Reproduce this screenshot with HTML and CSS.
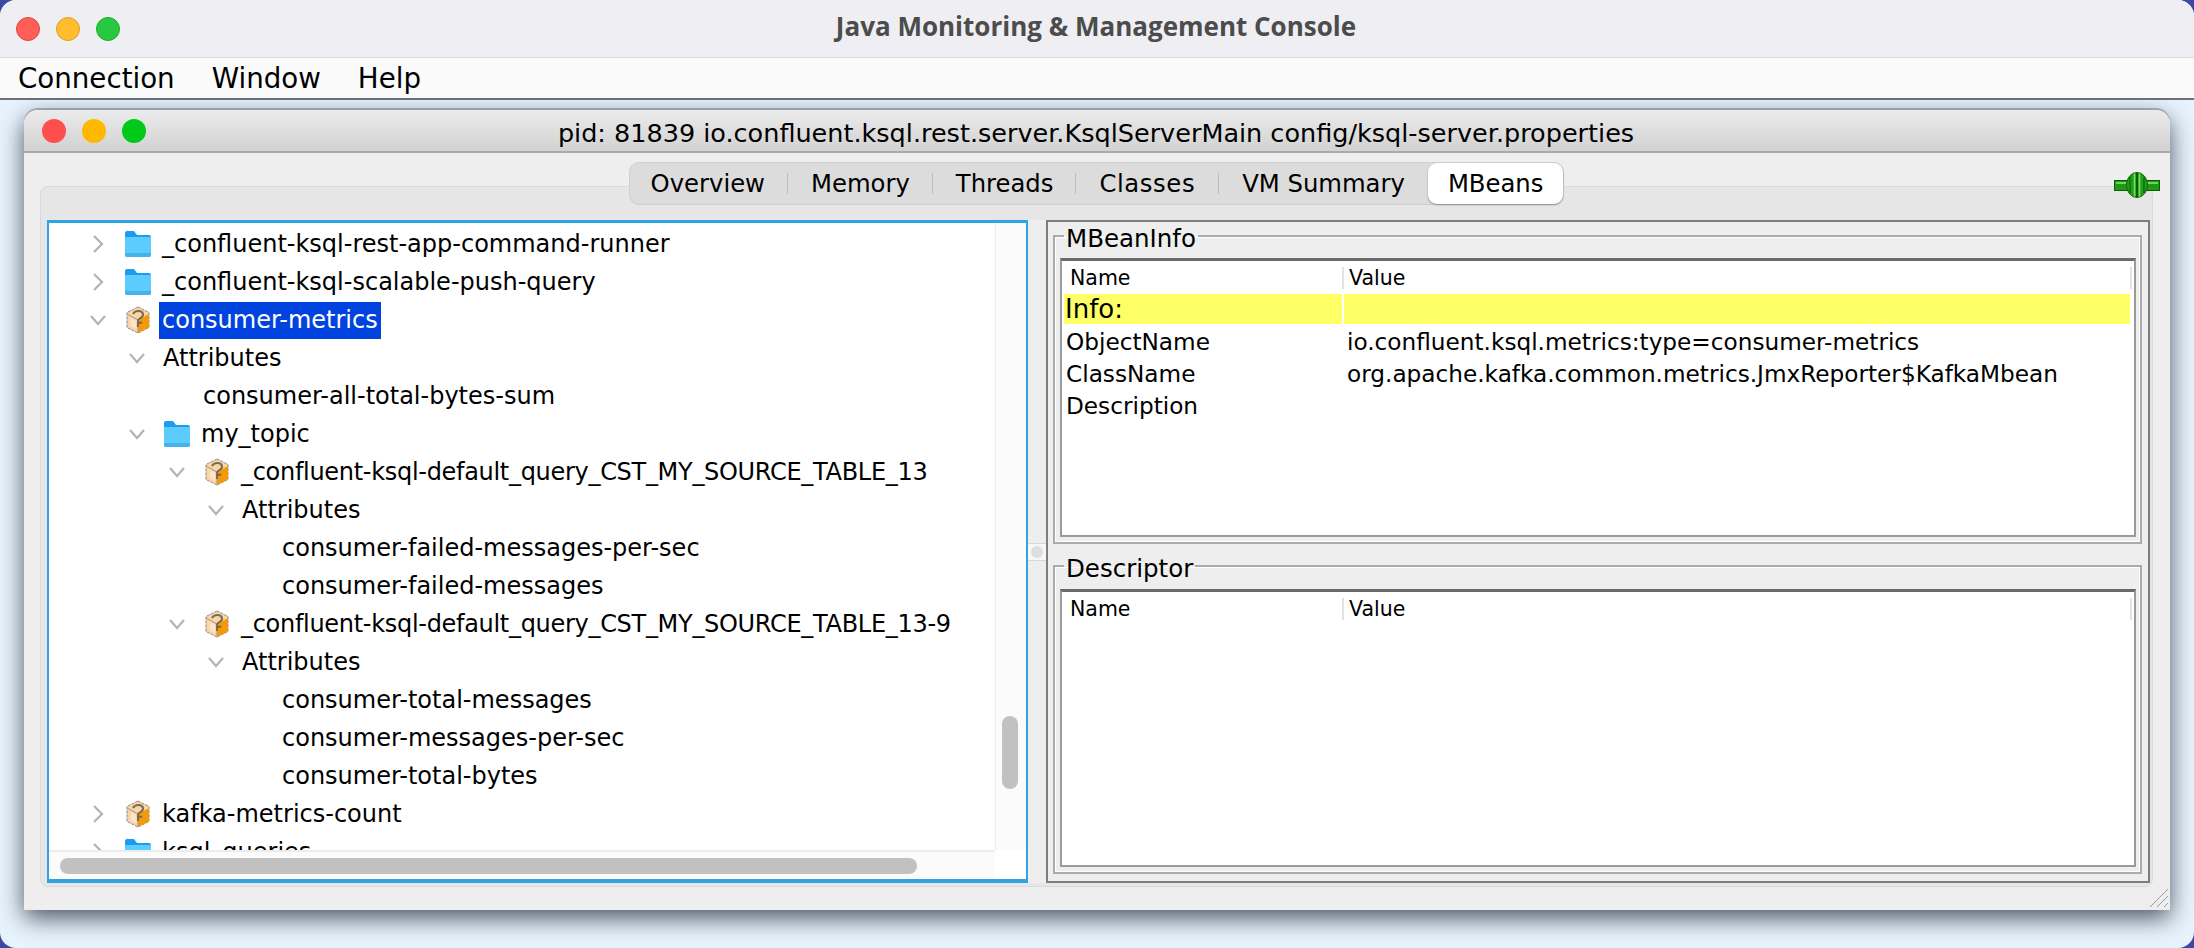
FILE: index.html
```html
<!DOCTYPE html>
<html lang="en">
<head>
  <meta charset="UTF-8">
  <title>Java Monitoring &amp; Management Console</title>
  <link rel="stylesheet" href="styles.css">
</head>
<body>
  <div class="desktop">
    <header class="app-title">
      <div class="lights">
        <span class="light red"></span><span class="light yellow"></span><span class="light green"></span>
      </div>
      <div class="app-name">Java Monitoring &amp; Management Console</div>
    </header>
    <nav class="menubar">
      <span>Connection</span><span>Window</span><span>Help</span>
    </nav>
    <div class="window">
      <div class="win-title">
        <div class="lights small">
          <span class="light red2"></span><span class="light yellow2"></span><span class="light green2"></span>
        </div>
        <div class="win-name">pid: 81839 io.confluent.ksql.rest.server.KsqlServerMain config/ksql-server.properties</div>
      </div>
      <div class="win-body">
        <div class="tabs-row">
          <div class="tabs">
            <span class="tab sep">Overview</span>
            <span class="tab sep">Memory</span>
            <span class="tab sep">Threads</span>
            <span class="tab sep">Classes</span>
            <span class="tab">VM Summary</span>
            <span class="tab active">MBeans</span>
          </div>
          <svg class="plug" width="46" height="26" viewBox="0 0 46 26">
            <rect x="0.5" y="8.5" width="45" height="10" fill="#1f9a14" stroke="#0b5c08"/>
            <rect x="2" y="10" width="42" height="2" fill="#6fd65c"/>
            <ellipse cx="23" cy="13" rx="10.5" ry="12.5" fill="#24a018" stroke="#0f650c"/>
            <path d="M16 5v16M30 5v16" stroke="#127a0e" stroke-width="2"/>
            <path d="M20.5 1.5v23M25.5 1.5v23" stroke="#7bdc68" stroke-width="1.5"/>
            <path d="M23 1v24" stroke="#0b5c08" stroke-width="2"/>
          </svg>
        </div>
        <div class="pane">
          <div class="tree">
            <div class="tree-view">
              <div class="tree-rows" id="rows"></div>
              <div class="vbar"><div class="vthumb"></div></div>
            </div>
            <div class="hbar-row">
              <div class="hbar"><div class="hthumb"></div></div>
              <div class="corner"></div>
            </div>
          </div>
          <div class="divider"><div class="handle"><span class="dot"></span></div></div>
          <div class="details">
            <fieldset class="group group-top">
              <legend>MBeanInfo</legend>
              <div class="table">
                <div class="thead"><span class="th name-col">Name</span><span class="th val-col">Value</span></div>
                <div class="info-row"><span class="name-col">Info:</span><span class="val-col"></span></div>
                <div class="row"><span class="name-col">ObjectName</span><span class="val-col">io.confluent.ksql.metrics:type=consumer-metrics</span></div>
                <div class="row"><span class="name-col">ClassName</span><span class="val-col">org.apache.kafka.common.metrics.JmxReporter$KafkaMbean</span></div>
                <div class="row"><span class="name-col">Description</span><span class="val-col"></span></div>
              </div>
            </fieldset>
            <fieldset class="group group-bottom">
              <legend>Descriptor</legend>
              <div class="table">
                <div class="thead"><span class="th name-col">Name</span><span class="th val-col">Value</span></div>
              </div>
            </fieldset>
          </div>
        </div>
      </div>
      <svg class="grip" width="20" height="20" viewBox="0 0 20 20">
        <path d="M1 19L19 1M8 19L19 8M15 19L19 15" stroke="#9a9a9a" stroke-width="1" fill="none"/>
      </svg>
    </div>
  </div>

  <script>
    const treeData = [
      { text: "_confluent-ksql-rest-app-command-runner", level: 0, arrow: "right", icon: "folder" },
      { text: "_confluent-ksql-scalable-push-query", level: 0, arrow: "right", icon: "folder" },
      { text: "consumer-metrics", level: 0, arrow: "down", icon: "bean", selected: true },
      { text: "Attributes", level: 1, arrow: "down" },
      { text: "consumer-all-total-bytes-sum", level: 2 },
      { text: "my_topic", level: 1, arrow: "down", icon: "folder" },
      { text: "_confluent-ksql-default_query_CST_MY_SOURCE_TABLE_13", level: 2, arrow: "down", icon: "bean" },
      { text: "Attributes", level: 3, arrow: "down" },
      { text: "consumer-failed-messages-per-sec", level: 4 },
      { text: "consumer-failed-messages", level: 4 },
      { text: "_confluent-ksql-default_query_CST_MY_SOURCE_TABLE_13-9", level: 2, arrow: "down", icon: "bean" },
      { text: "Attributes", level: 3, arrow: "down" },
      { text: "consumer-total-messages", level: 4 },
      { text: "consumer-messages-per-sec", level: 4 },
      { text: "consumer-total-bytes", level: 4 },
      { text: "kafka-metrics-count", level: 0, arrow: "right", icon: "bean" },
      { text: "ksql_queries", level: 0, arrow: "right", icon: "folder" },
    ];

    const arrows = {
      right: '<svg class="arrow" width="12" height="20" viewBox="0 0 12 20"><path d="M2 2l8 8-8 8" fill="none" stroke="#b4b4b4" stroke-width="2.2"/></svg>',
      down: '<svg class="arrow" width="18" height="12" viewBox="0 0 18 12"><path d="M2 2l7 8 7-8" fill="none" stroke="#b4b4b4" stroke-width="2.2"/></svg>',
    };
    const icons = {
      folder: `<svg class="icon" width="28" height="28" viewBox="0 0 28 28">
        <path d="M1 3a2 2 0 0 1 2-2h7l3 4h12a2 2 0 0 1 2 2v4H1z" fill="#1c9cf0"/>
        <path d="M1 7h26v18a2 2 0 0 1-2 2H3a2 2 0 0 1-2-2z" fill="#5ccbfd"/>
        <path d="M1 23h26v2a2 2 0 0 1-2 2H3a2 2 0 0 1-2-2z" fill="#45b2ea"/>
      </svg>`,
      bean: `<svg class="icon" width="28" height="28" viewBox="0 0 28 28">
        <path d="M14 1l11 5.5v15L14 27 3 21.500v-15z" fill="#f6d6aa" stroke="#8d8a84" stroke-dasharray="3 1"/>
        <path d="M14 14l11-6v13.500L14 27z" fill="#f39a0c"/>
        <path d="M3 8l11 6v13" fill="none" stroke="#a8977e"/>
        <path d="M9 8c2-4 9-4 10 0s-5 4-5 7 3 2 4 1M14 15v6" fill="none" stroke="#7d6a52" stroke-width="2"/>
        <path d="M7 12l5 3v8l-5-3z" fill="#fbe6c8"/>
      </svg>`,
    };

    const rowsEl = document.getElementById('rows');
    treeData.forEach(item => {
      const row = document.createElement('div');
      row.className = 'tree-row lvl' + item.level;
      row.innerHTML = `
        <span class="arrow-box">${item.arrow ? arrows[item.arrow] : ''}</span>
        ${item.icon ? icons[item.icon] : ''}
        <span class="label${item.selected ? ' selected' : ''}">${item.text}</span>
      `;
      rowsEl.appendChild(row);
    });
  </script>
</body>
</html>
```

FILE: styles.css
```css
* {
  box-sizing: border-box;
}
html, body {
  margin: 0;
  height: 100%;
  overflow: hidden;
  background: #3b49a6;
}
body {
  font-family: "DejaVu Sans", sans-serif;
  color: #000;
}
.desktop {
  width: 2194px;
  height: 948px;
  background: #e8f4fd;
  border-radius: 16px;
  overflow: hidden;
}

/* outer app */
.app-title {
  height: 57px;
  background: #eeeef3;
  display: flex;
  align-items: center;
  padding-left: 16px;
  position: relative;
  z-index: 2;
}
.lights {
  display: flex;
  gap: 16px;
}
.light {
  width: 24px;
  height: 24px;
  border-radius: 50%;
}
.red { background: #ff5f57; border: 1px solid #e2463f; }
.yellow { background: #febc2e; border: 1px solid #df9f24; }
.green { background: #28c840; border: 1px solid #1dad2b; }
.red2 { background: #ff4f4d; }
.yellow2 { background: #ffb800; }
.green2 { background: #00c91a; }
.app-name {
  flex: 1;
  text-align: center;
  font-family: "Open Sans", sans-serif;
  font-weight: 700;
  font-size: 26px;
  color: #4c4c4c;
  padding: 0 122px 6px 0;
}
.menubar {
  height: 43px;
  background: #fafafa;
  border-top: 1px solid #dcdcdc;
  border-bottom: 2px solid #6b7076;
  display: flex;
  align-items: center;
  gap: 37px;
  padding-left: 18px;
  font-size: 27.700px;
  position: relative;
  z-index: 2;
}

/* inner window */
.window {
  position: relative;
  width: 2146px;
  height: 800px;
  margin: 10px 0 0 24px;
  background: #eeeeee;
  border-radius: 14px 14px 0 0;
  box-shadow: 0 8px 24px rgba(20, 30, 45, 0.75), 0 -2px 0 #b4bcc8;
}
.win-title {
  height: 43px;
  background: linear-gradient(#ebebeb, #d2d2d2);
  border-bottom: 2px solid #a9a9a9;
  border-radius: 14px 14px 0 0;
  display: flex;
  align-items: center;
  padding-left: 18px;
}
.win-name {
  flex: 1;
  text-align: center;
  font-size: 25.500px;
  padding: 5px 124px 0 0;
  white-space: nowrap;
}
.win-body {
  padding: 8px 20px 0 23px;
}
.tabs-row {
  height: 59px;
  display: flex;
  justify-content: center;
  position: relative;
}
.tabs {
  height: 43px;
  margin: 1px 4px 0 0;
  display: flex;
  align-items: center;
  background: #dcdcdc;
  border: 1px solid #d0d0d0;
  border-radius: 10px;
  position: relative;
  font-size: 24.300px;
  z-index: 1;
}
.tab {
  height: 41px;
  display: flex;
  align-items: center;
  padding: 0 23px;
  position: relative;
  white-space: nowrap;
}
.tab:first-child {
  padding-left: 21px;
}
.tab:nth-child(4) {
  letter-spacing: 0.6px;
  padding-right: 24px;
}
.tab.sep::after {
  content: "";
  position: absolute;
  right: 0;
  top: 10px;
  bottom: 10px;
  width: 1px;
  background: #bdbdbd;
}
.tab.active {
  padding: 0 20px;
  background: #fff;
  border-radius: 9px;
  box-shadow: 0 1px 2px rgba(0, 0, 0, 0.35);
}
.plug {
  position: absolute;
  right: -10px;
  top: 11px;
  z-index: 1;
}
.pane {
  display: flex;
  height: 663px;
  position: relative;
}
.pane::before {
  content: "";
  position: absolute;
  left: -7px;
  right: -3px;
  top: -34px;
  bottom: -4px;
  background: #e6e6e6;
  border: 1px solid #dadada;
  border-radius: 8px;
}

/* tree */
.tree {
  position: relative;
  width: 981px;
  flex: none;
  background: #fff;
  border-top: 3px solid #2ea3e6;
  border-left: 2px solid #2ea3e6;
  border-right: 2px solid #2ea3e6;
  border-bottom: 4px solid #2ea3e6;
  display: flex;
  flex-direction: column;
  font-size: 24px;
}
.tree-view {
  height: 627px;
  display: flex;
  overflow: hidden;
}
.tree-rows {
  flex: 1;
  overflow: hidden;
  padding-top: 2px;
}
.tree-row {
  height: 38px;
  display: flex;
  align-items: center;
  white-space: nowrap;
}
.lvl0 { padding-left: 31px; }
.lvl1 { padding-left: 70px; }
.lvl2 { padding-left: 110px; }
.lvl3 { padding-left: 149px; }
.lvl4 { padding-left: 189px; }
.arrow-box {
  width: 36px;
  height: 28px;
  margin-right: 5px;
  display: flex;
  align-items: center;
  justify-content: center;
  flex: none;
}
.icon {
  flex: none;
  margin: 0 7px 0 3px;
}
.label {
  padding: 0 3px;
  line-height: 37px;
}
.lvl2 .icon + .label {
  letter-spacing: -0.3px;
}
.label.selected {
  background: #0043df;
  color: #fff;
}
.vbar {
  width: 31px;
  background: #fbfbfb;
  border-left: 1px solid #ececec;
  position: relative;
  flex: none;
}
.vthumb {
  position: absolute;
  left: 6px;
  top: 493px;
  width: 16px;
  height: 73px;
  background: #c1c1c1;
  border-radius: 8px;
}
.hbar-row {
  flex: 1;
  display: flex;
}
.hbar {
  flex: 1;
  background: #fbfbfb;
  border-top: 2px solid #ececec;
  padding: 6px 0 0 11px;
}
.hthumb {
  width: 857px;
  height: 16px;
  background: #c1c1c1;
  border-radius: 8px;
}
.corner {
  width: 31px;
  background: #fff;
}

/* splitter */
.divider {
  width: 18px;
  flex: none;
  position: relative;
  z-index: 1;
  background: #eeeeee;
}
.handle {
  position: absolute;
  left: 0;
  right: 0;
  top: 323px;
  height: 18px;
  background: #f6f6f6;
  border-top: 1px solid #d8d8d8;
  border-bottom: 1px solid #d8d8d8;
  display: flex;
  align-items: center;
  justify-content: center;
}
.dot {
  width: 12px;
  height: 12px;
  border-radius: 50%;
  background: #dedede;
}

/* details */
.details {
  flex: 1;
  position: relative;
  z-index: 1;
  background: #eeeeee;
  border: 2px solid #7d7d7d;
  padding: 0 6px 0 5px;
}
.group {
  margin: 0;
  padding: 4px 4px 5px 5px;
  border: 2px solid #ababab;
  box-shadow: inset 0 0 0 1px #fff;
  font-size: 24.500px;
  min-width: 0;
}
.group legend {
  margin-left: 4px;
  padding: 6px 2px 0;
  line-height: 30px;
}
.group-top { height: 326px; margin-top: -4px; }
.group-bottom { height: 326px; margin-top: 4px; padding-top: 5px; }
.table {
  background: #fff;
  border: 2px solid #9a9a9a;
  border-top: 3px solid #6a6a6a;
  font-size: 23.200px;
  padding: 0 4px 0 2px;
}
.group-top .table { height: 279px; }
.group-bottom .table { height: 278px; }
.thead {
  height: 33px;
  display: flex;
  align-items: center;
  font-size: 20.500px;
}
.thead::after {
  content: "";
  margin-left: auto;
  margin-right: -2px;
  width: 2px;
  height: 22px;
  background: #e2e2e2;
}
.name-col {
  display: block;
  width: 280px;
  flex: none;
  padding-left: 2px;
}
.th.name-col {
  padding-left: 6px;
  height: 22px;
  line-height: 22px;
  border-right: 2px solid #e2e2e2;
}
.th.val-col {
  padding-left: 5px;
}
.info-row {
  height: 30px;
  display: flex;
  align-items: center;
  font-size: 26px;
  background: #ffff66;
}
.info-row .name-col {
  border-right: 2px solid #fff;
  line-height: 30px;
  padding-left: 1px;
}
.row {
  height: 32px;
  display: flex;
  align-items: center;
  white-space: nowrap;
}
.row:nth-child(3) { margin-top: 1px; }
.val-col {
  padding-left: 3px;
}
.grip {
  position: absolute;
  right: 1px;
  bottom: 2px;
}
```
